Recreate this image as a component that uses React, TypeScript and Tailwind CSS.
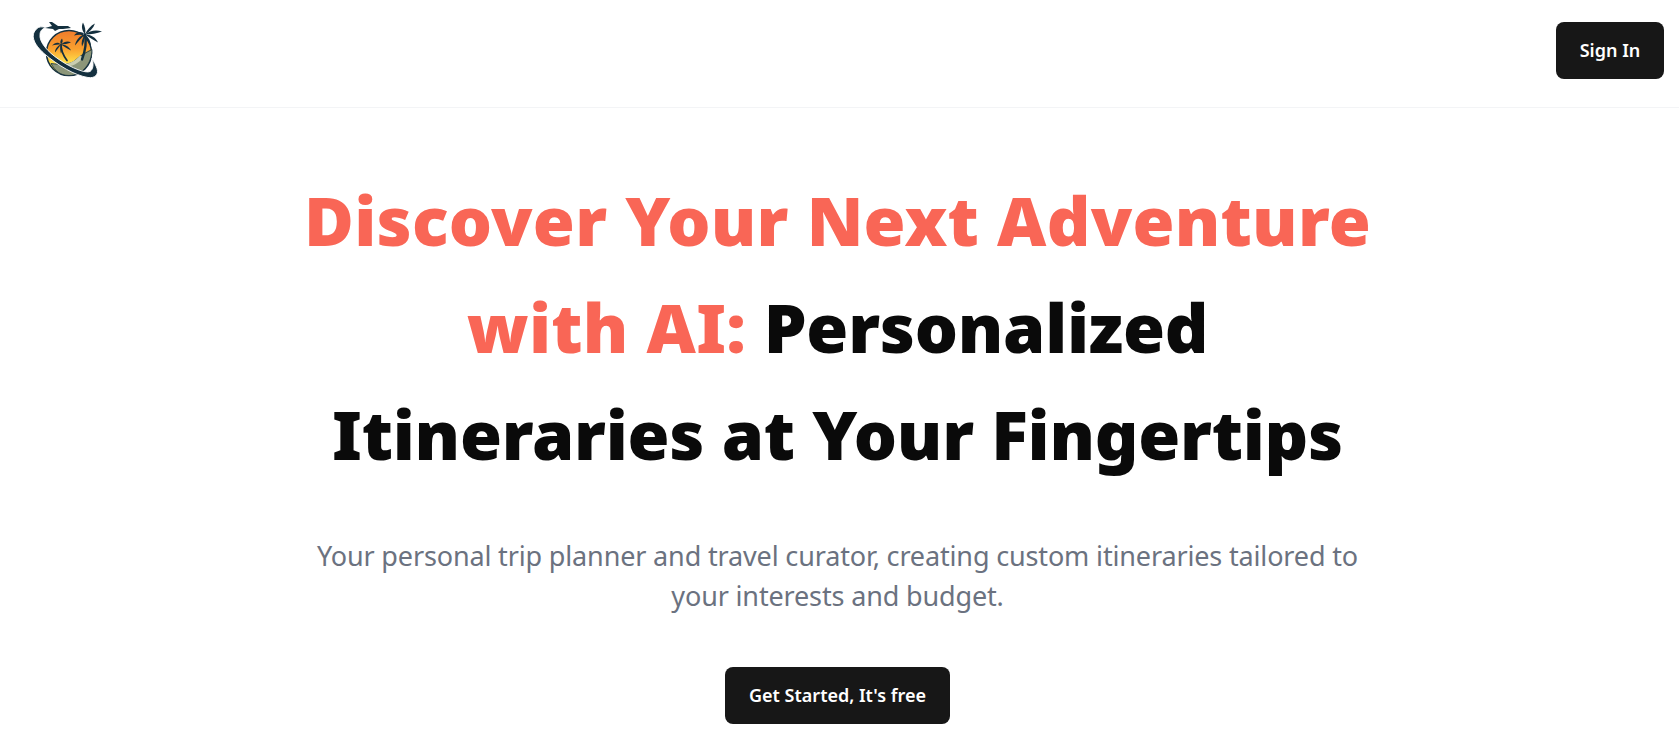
function Frond({ d }: { d: string }) {
  return <path d={d} fill="#14303f" />;
}

function Logo() {
  return (
    <svg viewBox="0 0 80 68" className="h-[68px] w-[80px] shrink-0" aria-label="Logo">
      <defs>
        <linearGradient id="sun" x1="0" y1="0" x2="0" y2="1">
          <stop offset="0" stopColor="#ee7b2c" />
          <stop offset="0.4" stopColor="#fa9f2e" />
          <stop offset="0.72" stopColor="#fee04a" />
        </linearGradient>
      </defs>
      <g transform="translate(0 -1.5)">
        <circle cx="41" cy="38.5" r="22.5" fill="url(#sun)" stroke="#14303f" strokeWidth="1.5" />
        <path d="M23 49 C32 50 41 51 47 46 C52 41 58 38 64 35 C64 49 54 61 41 61 C32 61 27 56 23 49Z" fill="#8c9679" stroke="#14303f" strokeWidth="0.8" />
        <path d="M32 50 C40 50 47 47 52 41 L55 43 C50 50 42 53 33 52Z" fill="#c9cdb0" />
        <path d="M9 14 C2 20 5 29 16 39 C30 51 47 61 60 63 C67 64 71 60 69 54 C68 51 66 47 64 44 C66 50 65 55 62 57 C58 59 44 54 31 45 C19 37 11 27 12 20 C12 17 14 14 18 13 C14 12 11 12 9 14Z" fill="#14303f" stroke="#fff" strokeWidth="0.9" />
        <g stroke="#14303f" fill="none" strokeLinecap="round">
          <path d="M54 45 C57 37 59 29 57 20" strokeWidth="2.4" />
          <path d="M39 46 C36 42 33 37 33 30" strokeWidth="1.7" />
        </g>
        <Frond d="M57 20 C53 16 49 17 46 21 C50 20 53 20 57 20Z" />
        <Frond d="M57 20 C52 21 48 25 47 31 C50 27 53 24 57 20Z" />
        <Frond d="M57 20 C54 24 53 28 54 32 C56 28 57 24 57 20Z" />
        <Frond d="M57 20 C54 16 53 12 55 8 C57 12 58 16 57 20Z" />
        <Frond d="M57 20 C59 15 63 11 67 9 C65 14 62 17 57 20Z" />
        <Frond d="M57 20 C62 16 68 15 74 17 C69 19 63 20 57 20Z" />
        <Frond d="M57 20 C63 20 68 23 70 28 C65 25 61 23 57 20Z" />
        <Frond d="M57 20 C61 23 63 27 63 32 C60 28 58 24 57 20Z" />
        <Frond d="M33 30 C30 27 27 28 24 31 C27 30 30 30 33 30Z" />
        <Frond d="M33 30 C30 31 27 34 27 38 C29 35 31 33 33 30Z" />
        <Frond d="M33 30 C32 28 32 26 34 24 C35 26 35 28 33 30Z" />
        <Frond d="M33 30 C36 27 40 26 43 28 C40 29 36 30 33 30Z" />
        <Frond d="M33 30 C37 30 41 32 43 36 C39 34 36 32 33 30Z" />
        <Frond d="M33 30 C32 33 32 36 33 39 C34 36 35 33 33 30Z" />
      </g>
      <path d="M17 12 L24 10 L21 6 L24 6 L30 10 L40 10 L43 12 L35 13 L31 13 L27 15 L25 13Z" fill="#14303f" />
    </svg>
  );
}

export default function App() {
  return (
    <div className="min-h-screen bg-white font-['Noto_Sans','Open_Sans',sans-serif]">
      <header className="flex h-[108px] items-start justify-between border-b border-gray-100 pl-[28px] pr-[15px] pt-[16px]">
        <Logo />
        <button className="mt-[6px] h-[57px] w-[108px] rounded-lg bg-[#171717] text-[18px] font-semibold text-white">Sign In</button>
      </header>
      <main className="flex flex-col items-center pr-[4px] pt-[58px]">
        <h1 className="w-[1090px] text-center text-[68px] font-black leading-[107px] tracking-[-0.25px] text-[#0a0a0a]">
          <span className="tracking-[0.25px] text-[#f96656]">Discover Your Next Adventure with AI:</span> Personalized Itineraries at Your Fingertips
        </h1>
        <p className="mt-[49px] w-[1060px] text-center text-[27px] leading-[40px] tracking-[-0.15px] text-[#6b7280]">
          Your personal trip planner and travel curator, creating custom itineraries tailored to your interests and budget.
        </p>
        <button className="mt-[51px] h-[57px] w-[225px] rounded-lg bg-[#171717] text-[18px] font-semibold text-white">Get Started, It's free</button>
      </main>
    </div>
  );
}
